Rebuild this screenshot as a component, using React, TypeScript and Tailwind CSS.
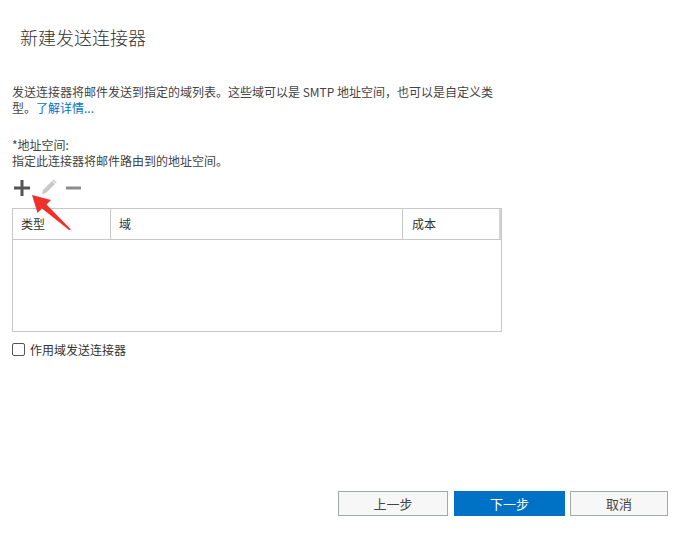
import React from 'react'

const font = { fontFamily: '"Noto Sans CJK SC", "Noto Sans", sans-serif' }

function PlusIcon() {
  return (
    <svg width="16" height="16" viewBox="0 0 16 16">
      <rect x="6.5" y="0" width="3" height="16" fill="#555" />
      <rect x="0" y="6.5" width="16" height="3" fill="#555" />
    </svg>
  )
}

function PencilIcon() {
  return (
    <svg width="17" height="17" viewBox="0 0 17 17">
      <path d="M2 15 L3 11 L12 2 L15 5 L6 14 Z" fill="#c8c8c8" />
      <path d="M12.6 1.4 L13.6 0.4 L16.6 3.4 L15.6 4.4 Z" fill="#c8c8c8" />
    </svg>
  )
}

function MinusIcon() {
  return (
    <svg width="15" height="16" viewBox="0 0 15 16">
      <rect x="0" y="6.5" width="15" height="3" fill="#8c8c8c" />
    </svg>
  )
}

function RedArrow() {
  return (
    <svg
      className="pointer-events-none absolute left-0 top-0"
      width="80"
      height="240"
      viewBox="0 0 80 240"
    >
      <polygon
        points="32,195 51,200 46.5,204.5 71,229.5 69,230 42,208.5 37.5,213"
        fill="#f0302a"
      />
    </svg>
  )
}

function Button({ label, primary }: { label: string; primary?: boolean }) {
  return (
    <button
      className={
        primary
          ? 'h-[25px] w-full bg-[#0072c6] text-[13px] text-white'
          : 'h-[25px] w-full border border-[#a3a8a8] bg-[#f7f7f7] text-[13px] text-[#444]'
      }
      style={font}
    >
      {label}
    </button>
  )
}

export default function App() {
  return (
    <div className="relative flex h-[549px] w-[700px] flex-col bg-white text-[#333]" style={font}>
      <h1 className="ml-[20px] mt-[26px] text-[18px] font-light leading-[22px] text-[#333]">
        新建发送连接器
      </h1>

      <p className="ml-[12px] mt-[36px] text-[12px] leading-[16px] text-[#444]">
        发送连接器将邮件发送到指定的域列表。这些域可以是 SMTP 地址空间，也可以是自定义类
        <br />
        型。<span className="text-[#0072c6]">了解详情...</span>
      </p>

      <div className="ml-[12px] mt-[21px] text-[12px] leading-[16px] text-[#444]">
        <div>*地址空间:</div>
        <div>指定此连接器将邮件路由到的地址空间。</div>
      </div>

      <div className="ml-[14px] mt-[11px] flex h-[16px] items-center">
        <PlusIcon />
        <span className="ml-[10px] mb-[2px]">
          <PencilIcon />
        </span>
        <span className="ml-[9px]">
          <MinusIcon />
        </span>
      </div>

      <div className="ml-[12px] mt-[12px] h-[124px] w-[490px] border border-[#c8c8c8]">
        <div className="flex h-[31px] border-b border-[#c8c8c8] text-[12px] text-[#333]">
          <div className="flex w-[98px] items-center border-r border-[#c8c8c8] pl-[8px]">类型</div>
          <div className="flex w-[292px] items-center border-r border-[#c8c8c8] pl-[8px]">域</div>
          <div className="flex flex-1 items-center border-r-2 border-[#d4d4d4] pl-[9px]">成本</div>
        </div>
      </div>

      <label className="ml-[12px] mt-[10px] flex items-center text-[12px] text-[#333]">
        <span className="h-[13px] w-[13px] rounded-[2px] border border-[#555] bg-white" />
        <span className="ml-[5px] leading-[15px]">作用域发送连接器</span>
      </label>

      <div className="mt-auto mb-[33px] flex pl-[338px]">
        <div className="w-[110px]">
          <Button label="上一步" />
        </div>
        <div className="ml-[6px] w-[111px]">
          <Button label="下一步" primary />
        </div>
        <div className="ml-[5px] w-[98px]">
          <Button label="取消" />
        </div>
      </div>

      <RedArrow />
    </div>
  )
}
